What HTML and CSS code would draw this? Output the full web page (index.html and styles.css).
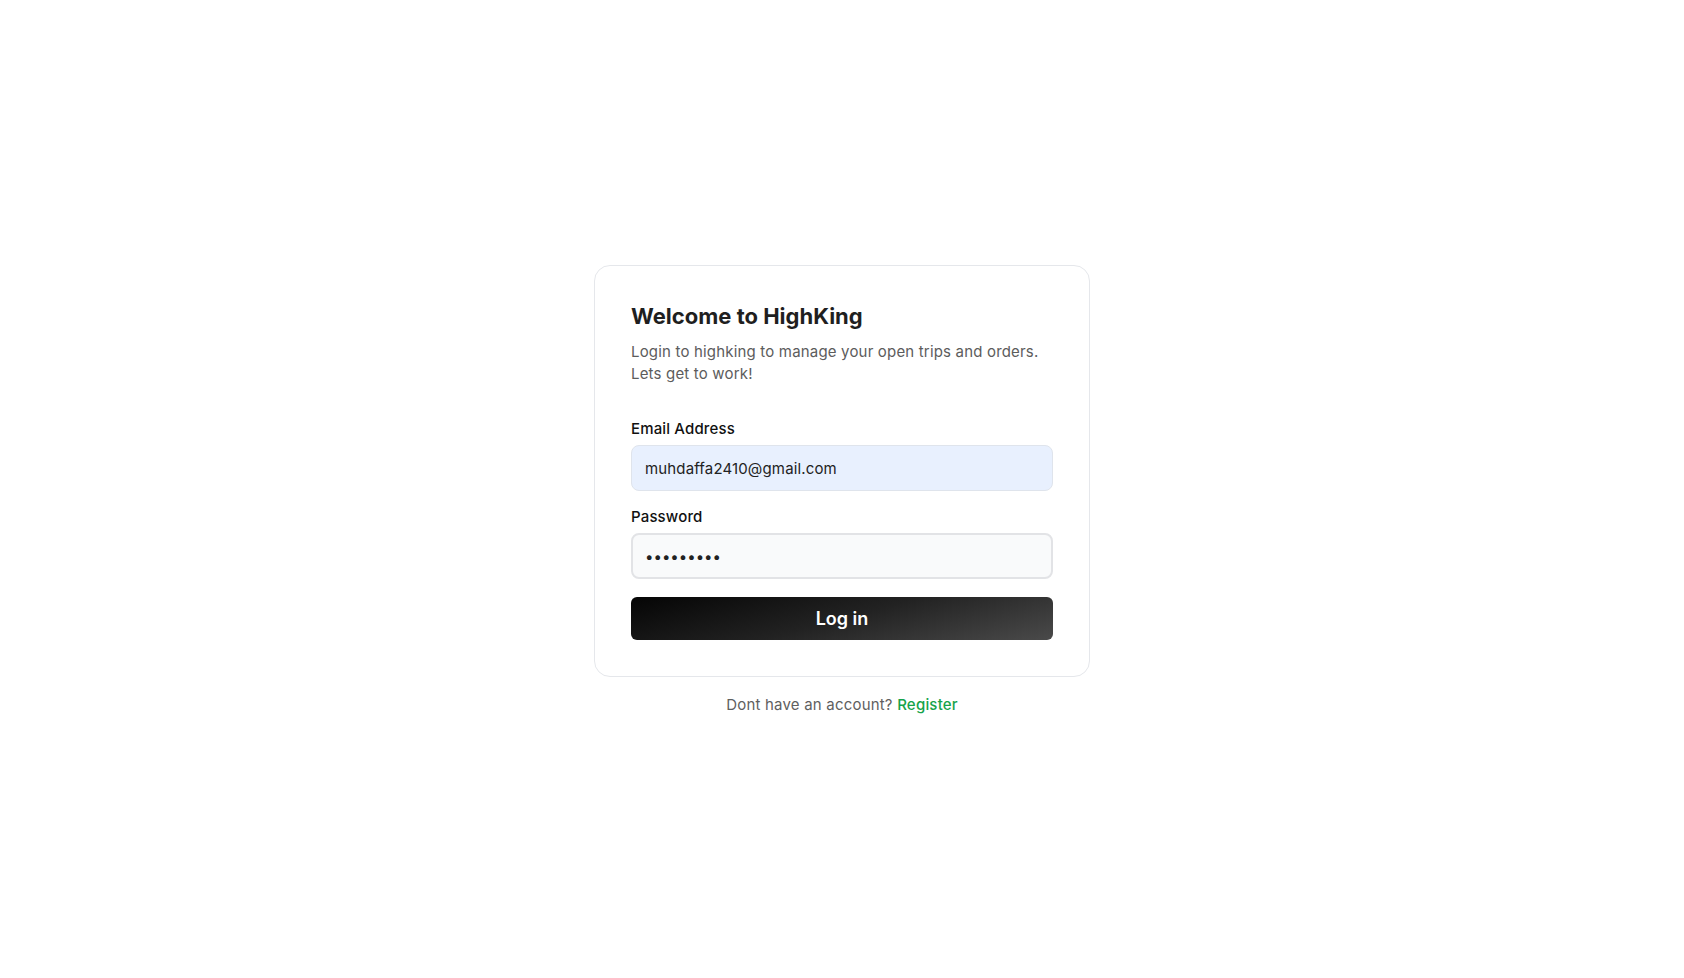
FILE: index.html
```html
<!DOCTYPE html>
<html lang="en">
<head>
  <meta charset="UTF-8">
  <meta name="viewport" content="width=device-width, initial-scale=1.0">
  <title>HighKing - Login</title>
  <link rel="stylesheet" href="styles.css">
</head>
<body>
  <div class="auth">
    <form class="auth-card" onsubmit="return false">
      <h1 class="auth-title">Welcome to HighKing</h1>
      <p class="auth-subtitle">Login to highking to manage your open trips and orders. Lets get to work!</p>

      <div class="field field-first">
        <label class="field-label" for="email">Email Address</label>
        <input class="field-input autofilled" id="email" type="email" value="muhdaffa2410@gmail.com">
      </div>

      <div class="field">
        <label class="field-label" for="password">Password</label>
        <input class="field-input focused" id="password" type="password" value="123456789">
      </div>

      <button class="button-primary" type="submit">Log in</button>
    </form>

    <p class="auth-footer">Dont have an account? <a href="#" class="auth-link">Register</a></p>
  </div>
</body>
</html>
```

FILE: styles.css
```css
* {
  margin: 0;
  padding: 0;
  box-sizing: border-box;
}

body {
  font-family: Inter, 'Noto Sans', sans-serif;
  background: #ffffff;
  display: flex;
  justify-content: center;
  align-items: center;
  height: 100vh;
  color: #1f1f1f;
}

.auth {
  display: flex;
  flex-direction: column;
  align-items: center;
  padding-top: 2px;
}

.auth-card {
  width: 496px;
  background: #ffffff;
  border: 1px solid #e5e7eb;
  border-radius: 16px;
  padding: 36px 36px 36px;
  display: flex;
  flex-direction: column;
}

.auth-title {
  font-size: 22px;
  line-height: 28px;
  font-weight: 700;
  color: #1f1f1f;
}

.auth-subtitle {
  margin-top: 11px;
  font-size: 15px;
  line-height: 22px;
  letter-spacing: 0.18px;
  color: #5c5c5c;
}

.field {
  display: flex;
  flex-direction: column;
  gap: 6px;
  margin-top: 16px;
}

.field-first {
  margin-top: 34px;
}

.field-label {
  font-size: 15px;
  line-height: 20px;
  font-weight: 500;
  letter-spacing: 0.15px;
  color: #111111;
}

.field-input {
  height: 46px;
  width: 100%;
  border-radius: 8px;
  border: 1px solid #e5e7eb;
  background: #f9fafb;
  padding: 0 13px;
  font-family: inherit;
  font-size: 15px;
  letter-spacing: 0.15px;
  color: #222222;
  outline: none;
}

.field-input.autofilled {
  background: #e8f0fe;
  border-color: #dfe4ec;
}

.field-input.focused {
  border: 2px solid #e2e3e6;
  padding: 0 12px;
  letter-spacing: 0;
}

.button-primary {
  margin-top: 18px;
  height: 43px;
  border: none;
  border-radius: 6px;
  background: linear-gradient(165deg, #050505 0%, #222222 50%, #4a4a4a 100%);
  color: #ffffff;
  font-family: inherit;
  font-size: 18px;
  font-weight: 600;
  cursor: pointer;
}

.auth-footer {
  margin-top: 18px;
  font-size: 15px;
  line-height: 20px;
  letter-spacing: 0.2px;
  color: #5f5f5f;
}

.auth-link {
  color: #16a34a;
  font-weight: 500;
  text-decoration: none;
}
```
